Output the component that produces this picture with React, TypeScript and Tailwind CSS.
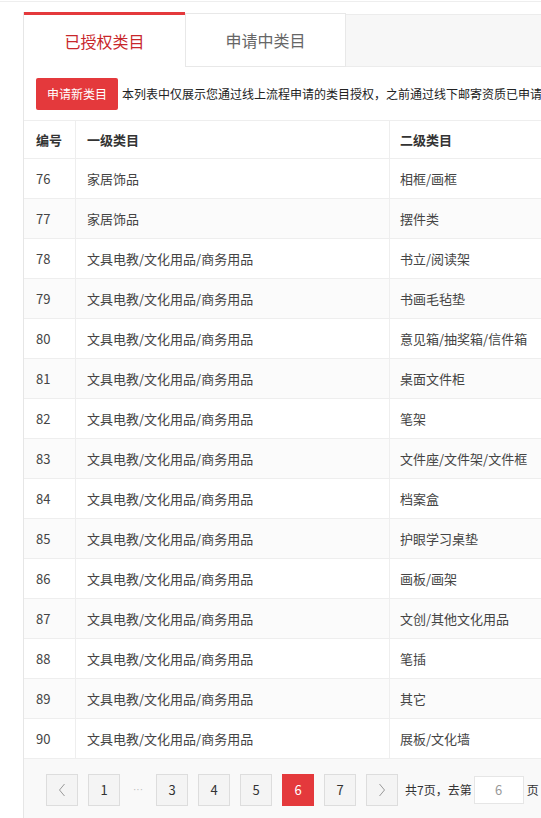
import React from "react";

const rows: [string, string, string][] = [
  ["76", "家居饰品", "相框/画框"],
  ["77", "家居饰品", "摆件类"],
  ["78", "文具电教/文化用品/商务用品", "书立/阅读架"],
  ["79", "文具电教/文化用品/商务用品", "书画毛毡垫"],
  ["80", "文具电教/文化用品/商务用品", "意见箱/抽奖箱/信件箱"],
  ["81", "文具电教/文化用品/商务用品", "桌面文件柜"],
  ["82", "文具电教/文化用品/商务用品", "笔架"],
  ["83", "文具电教/文化用品/商务用品", "文件座/文件架/文件框"],
  ["84", "文具电教/文化用品/商务用品", "档案盒"],
  ["85", "文具电教/文化用品/商务用品", "护眼学习桌垫"],
  ["86", "文具电教/文化用品/商务用品", "画板/画架"],
  ["87", "文具电教/文化用品/商务用品", "文创/其他文化用品"],
  ["88", "文具电教/文化用品/商务用品", "笔插"],
  ["89", "文具电教/文化用品/商务用品", "其它"],
  ["90", "文具电教/文化用品/商务用品", "展板/文化墙"],
];

function Chevron({ dir }: { dir: "l" | "r" }) {
  return (
    <svg width="10" height="16" viewBox="0 0 10 16" fill="none">
      {dir === "l" ? (
        <path d="M7.5 2 L2.5 8 L7.5 14" stroke="#999" strokeWidth="1" />
      ) : (
        <path d="M2.5 2 L7.5 8 L2.5 14" stroke="#999" strokeWidth="1" />
      )}
    </svg>
  );
}

function PageBtn({ children, active }: { children: React.ReactNode; active?: boolean }) {
  return (
    <div
      className={
        active
          ? "w-[32px] h-[32px] flex items-center justify-center bg-[#e4393c] border border-[#e4393c] text-white text-[13px]"
          : "w-[32px] h-[32px] flex items-center justify-center bg-[#f4f4f4] border border-[#dddddd] text-[#333] text-[13px]"
      }
    >
      {children}
    </div>
  );
}

export default function App() {
  return (
    <div
      className="w-[541px] h-[818px] overflow-hidden bg-white"
      style={{ fontFamily: '"Noto Sans CJK SC", "Liberation Sans", sans-serif' }}
    >
      <div className="h-[2px] border-b border-[#eeeeee]" />
      <div className="ml-[23px] mt-[10px] w-[640px] border-l border-[#e6e6e6]">
        {/* Tabs */}
        <div className="flex h-[55px]">
          <div className="w-[161px] bg-white border-t-[3px] border-[#e4393c] flex items-center justify-center text-[16px] text-[#c8272b]">
            已授权类目
          </div>
          <div className="mt-[1px] w-[161px] bg-white border border-[#e8e8e8] flex items-center justify-center text-[16px] text-[#666]">
            申请中类目
          </div>
          <div className="mt-[2px] flex-1 bg-[#f7f7f7] border-b border-t border-[#ececec]" />
        </div>
        {/* Toolbar */}
        <div className="h-[53px] flex items-center pl-[12px] gap-[4px] whitespace-nowrap">
          <div className="h-[32px] px-[11px] rounded-[2px] bg-[#e4393c] text-white text-[12px] flex items-center">
            申请新类目
          </div>
          <div className="text-[12px] text-[#222]">
            本列表中仅展示您通过线上流程申请的类目授权，之前通过线下邮寄资质已申请的类目不在此列表中展示
          </div>
        </div>
        {/* Table */}
        <div className="border-t border-[#eeeeee]">
          <div className="flex h-[38px] border-b border-[#eeeeee] text-[13px] font-bold text-[#333]">
            <div className="w-[52px] pl-[12px] flex items-center border-r border-[#eeeeee]">编号</div>
            <div className="w-[314px] pl-[11px] flex items-center border-r border-[#eeeeee]">一级类目</div>
            <div className="flex-1 pl-[10px] flex items-center">二级类目</div>
          </div>
          {rows.map((r, i) => (
            <div
              key={r[0]}
              className={
                i % 2 === 1
                  ? "flex h-[40px] border-b border-[#eeeeee] text-[13px] text-[#444] bg-[#fbfbfb]"
                  : "flex h-[40px] border-b border-[#eeeeee] text-[13px] text-[#444] bg-white"
              }
            >
              <div className="w-[52px] pl-[12px] flex items-center border-r border-[#eeeeee]">{r[0]}</div>
              <div className="w-[314px] pl-[11px] flex items-center border-r border-[#eeeeee]">{r[1]}</div>
              <div className="flex-1 pl-[10px] flex items-center">{r[2]}</div>
            </div>
          ))}
        </div>
        {/* Pagination */}
        <div className="h-[60px] bg-[#f9f9f9] flex items-start pt-[15px] pl-[22px] whitespace-nowrap">
          <div className="flex items-center gap-[10px]">
            <PageBtn>
              <Chevron dir="l" />
            </PageBtn>
            <PageBtn>1</PageBtn>
            <div
              className="w-[16px] text-center text-[#bbbbbb] text-[10px] leading-none"
              style={{ fontFamily: '"Liberation Sans", sans-serif' }}
            >
              ···
            </div>
            <PageBtn>3</PageBtn>
            <PageBtn>4</PageBtn>
            <PageBtn>5</PageBtn>
            <PageBtn active>6</PageBtn>
            <PageBtn>7</PageBtn>
            <PageBtn>
              <Chevron dir="r" />
            </PageBtn>
          </div>
          <div className="ml-[7px] h-[32px] flex items-center text-[12px] text-[#333]">
            共7页，去第
            <div className="ml-[2px] w-[50px] h-[28px] bg-white border border-[#e6e6e6] flex items-center justify-center text-[#999] text-[13px]">
              6
            </div>
            <span className="ml-[3px]">页</span>
          </div>
        </div>
      </div>
    </div>
  );
}
